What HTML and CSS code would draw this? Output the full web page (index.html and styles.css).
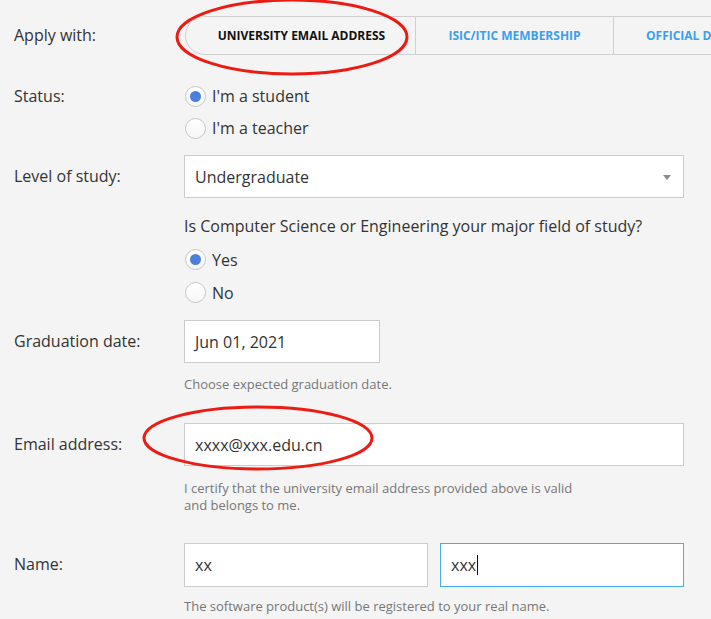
FILE: index.html
```html
<!DOCTYPE html>
<html>
<head>
<meta charset="utf-8">
<link rel="stylesheet" href="styles.css">
</head>
<body>
<div class="form">
  <div class="row row-tabs">
    <div class="label lbl-tabs">Apply with:</div>
    <div class="tabs">
      <div class="tab tab-active">UNIVERSITY EMAIL ADDRESS</div>
      <div class="tab tab-2">ISIC/ITIC MEMBERSHIP</div>
      <div class="tab tab-3">OFFICIAL DOCUMENT</div>
    </div>
  </div>

  <div class="row row-status">
    <div class="label lbl-radio">Status:</div>
    <div class="radios">
      <div class="radio-row"><span class="radio checked"></span><span>I'm a student</span></div>
      <div class="radio-row"><span class="radio"></span><span>I'm a teacher</span></div>
    </div>
  </div>

  <div class="row row-level">
    <div class="label lbl-input">Level of study:</div>
    <div class="select">
      <span>Undergraduate</span>
      <span class="arrow"></span>
    </div>
  </div>

  <div class="row row-question">
    <div></div>
    <div class="question">
      <div class="q-text">Is Computer Science or Engineering your major field of study?</div>
      <div class="radio-row"><span class="radio checked"></span><span>Yes</span></div>
      <div class="radio-row"><span class="radio"></span><span>No</span></div>
    </div>
  </div>

  <div class="row row-date">
    <div class="label lbl-input">Graduation date:</div>
    <div>
      <div class="input input-date">Jun 01, 2021</div>
      <div class="help help-date">Choose expected graduation date.</div>
    </div>
  </div>

  <div class="row row-email">
    <div class="label lbl-input">Email address:</div>
    <div>
      <div class="input">xxxx@xxx.edu.cn</div>
      <div class="help help-email">I certify that the university email address provided above is valid<br>and belongs to me.</div>
    </div>
  </div>

  <div class="row row-name">
    <div class="label lbl-input">Name:</div>
    <div>
      <div class="name-pair">
        <div class="input">xx</div>
        <div class="input input-focus">xxx<span class="caret"></span></div>
      </div>
      <div class="help help-name">The software product(s) will be registered to your real name.</div>
    </div>
  </div>
</div>

<svg class="mark mark-1" width="240" height="82" viewBox="0 0 240 82">
  <ellipse cx="118" cy="40" rx="115" ry="37" fill="none" stroke="#ec1c14" stroke-width="3"/>
</svg>
<svg class="mark mark-2" width="236" height="70" viewBox="0 0 236 70">
  <ellipse cx="117" cy="34" rx="114" ry="31" fill="none" stroke="#ec1c14" stroke-width="3"/>
</svg>
</body>
</html>
```

FILE: styles.css
```css
* { box-sizing: border-box; }
html, body {
  margin: 0;
  padding: 0;
  background: #f4f4f4;
  overflow: hidden;
}
body {
  font-family: "Open Sans", "DejaVu Sans", sans-serif;
  color: #333;
  font-size: 16px;
  position: relative;
  width: 711px;
  height: 619px;
}
.form {
  padding: 16px 0 0 14px;
}
.row {
  display: grid;
  grid-template-columns: 170px 500px;
  align-items: start;
}
.label {
  font-size: 16px;
  color: #333;
}
.lbl-tabs { line-height: 39px; }
.lbl-radio { line-height: 32px; }
.lbl-input { line-height: 43px; }

/* tabs */
.tabs {
  display: flex;
  height: 39px;
  margin-left: 1px;
  width: 527px;
  overflow: hidden;
}
.tab {
  height: 39px;
  border: 1px solid #cfcfcf;
  border-left: none;
  display: flex;
  align-items: center;
  justify-content: center;
  font-size: 12px;
  font-weight: 700;
  color: #3a9ff0;
  white-space: nowrap;
  flex: none;
}
.tab-active {
  width: 231px;
  border-left: 1px solid #cfcfcf;
  border-radius: 20px 0 0 20px;
  color: #111;
  padding-left: 2px;
}
.tab-2 { width: 198px; }
.tab-3 {
  width: 200px;
  justify-content: flex-start;
  padding-left: 32px;
}

/* radios */
.row-status { margin-top: 25px; }
.radio-row {
  display: flex;
  align-items: center;
  height: 32px;
  gap: 6px;
  font-size: 16px;
  line-height: 1;
}
.radio {
  width: 21px;
  height: 21px;
  border-radius: 50%;
  border: 1px solid #c6c6c6;
  background: linear-gradient(#fff, #f6f6f6);
  display: inline-flex;
  align-items: center;
  justify-content: center;
  flex: none;
  margin-left: 1px;
}
.radio.checked::after {
  content: "";
  width: 11px;
  height: 11px;
  border-radius: 50%;
  background: #4a80db;
}

/* select */
.row-level { margin-top: 11px; }
.select {
  height: 43px;
  background: #fff;
  border: 1px solid #cccccc;
  display: flex;
  align-items: center;
  justify-content: space-between;
  padding: 0 12px 0 10px;
  font-size: 16px;
}
.arrow {
  width: 0;
  height: 0;
  border-left: 4px solid transparent;
  border-right: 4px solid transparent;
  border-top: 5px solid #8a8a8a;
  margin-top: 2px;
}

/* question */
.row-question { margin-top: 16px; }
.q-text {
  line-height: 24px;
  height: 29px;
  font-size: 16px;
}
.question .radio-row { height: 33px; }

/* inputs */
.row-date { margin-top: 11px; }
.input {
  height: 43px;
  background: #fff;
  border: 1px solid #cccccc;
  display: flex;
  align-items: center;
  padding: 0 10px;
  font-size: 16px;
}
.input-date { width: 196px; }
.help {
  font-size: 13px;
  color: #777;
  line-height: 17px;
}
.help-date { margin-top: 13px; }
.row-email { margin-top: 30px; }
.help-email { margin-top: 14px; }
.row-name { margin-top: 29px; }
.name-pair {
  display: grid;
  grid-template-columns: 244px 244px;
  gap: 12px;
}
.name-pair .input { height: 44px; }
.input-focus { border-color: #46aeea; }
.caret {
  display: inline-block;
  width: 1px;
  height: 20px;
  background: #111;
  margin-left: 1px;
}
.help-name { margin-top: 11px; }

/* annotation marks */
.mark {
  position: absolute;
  pointer-events: none;
}
.mark-1 { left: 174px; top: -3px; }
.mark-2 { left: 141px; top: 404px; }
```
